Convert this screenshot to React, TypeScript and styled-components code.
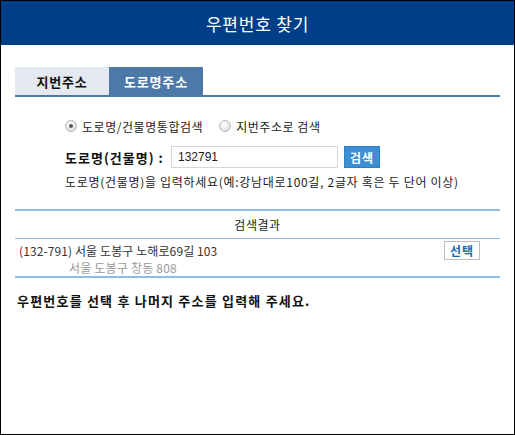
import styled, { createGlobalStyle } from "styled-components"

const GlobalStyle = createGlobalStyle`
  html, body {
    margin: 0;
    padding: 0;
    background: #fff;
  }
  * {
    box-sizing: border-box;
  }
  body {
    font-family: "Noto Sans CJK KR", "Noto Sans", sans-serif;
    font-size: 12px;
    letter-spacing: 0.55px;
    color: #222;
  }
`

const Frame = styled.div`
  width: 515px;
  height: 435px;
  border: 1px solid #000;
  display: flex;
  flex-direction: column;
`

const Header = styled.header`
  height: 44px;
  background: #003f87;
  color: #fff;
  display: flex;
  align-items: center;
  justify-content: center;
  font-size: 17px;
  letter-spacing: 0.8px;
`

const Body = styled.div`
  padding: 22px 14px 0 14px;
  display: flex;
  flex-direction: column;
`

const Tabs = styled.div`
  display: flex;
  border-bottom: 2px solid #4d79a8;
`

const Tab = styled.div<{ $active?: boolean }>`
  width: 94px;
  height: 28px;
  display: flex;
  align-items: center;
  justify-content: center;
  font-size: 13px;
  font-weight: 700;
  letter-spacing: 0.8px;
  background: ${(p) => (p.$active ? "#4d79a8" : "#e4e9f1")};
  color: ${(p) => (p.$active ? "#fff" : "#111")};
`

const SearchBox = styled.div`
  padding: 20px 0 0 50px;
  display: flex;
  flex-direction: column;
`

const RadioRow = styled.div`
  display: flex;
  align-items: center;
  height: 18px;
  gap: 16px;
`

const RadioLabel = styled.label`
  display: flex;
  align-items: center;
  gap: 5px;
  color: #222;
`

const RadioDot = styled.span<{ $checked?: boolean }>`
  width: 12px;
  height: 12px;
  border-radius: 50%;
  border: 1px solid #b9b9b9;
  background: radial-gradient(circle at 40% 35%, #ffffff 0%, #e6e6e6 60%, #cfcfcf 100%);
  display: flex;
  align-items: center;
  justify-content: center;

  &::after {
    content: "";
    width: 4px;
    height: 4px;
    border-radius: 50%;
    background: ${(p) => (p.$checked ? "#555" : "transparent")};
  }
`

const InputRow = styled.div`
  display: flex;
  align-items: center;
  margin-top: 11px;
  height: 22px;
`

const FieldLabel = styled.span`
  font-weight: 700;
  font-size: 13px;
  letter-spacing: 1px;
  color: #111;
  width: 106px;
`

const TextInput = styled.input`
  width: 167px;
  height: 22px;
  border: 1px solid #d6d6d6;
  padding: 0 6px;
  font-family: "Liberation Sans", sans-serif;
  font-size: 12px;
  color: #222;
  outline: none;
`

const SearchButton = styled.button`
  margin-left: 6px;
  width: 36px;
  height: 22px;
  border: 1px solid #2f7fc3;
  background: #3d8fd3;
  color: #fff;
  font-family: inherit;
  font-weight: 700;
  font-size: 12px;
  letter-spacing: 1px;
  padding: 0;
`

const Hint = styled.p`
  margin: 5px 0 0 0;
  height: 17px;
  line-height: 17px;
  letter-spacing: 0.7px;
  white-space: nowrap;
  color: #222;
`

const Results = styled.div`
  margin-top: 19px;
  border-top: 2px solid #8cbde6;
  border-bottom: 2px solid #8cbde6;
`

const ResultsTitle = styled.div`
  height: 28px;
  display: flex;
  align-items: center;
  justify-content: center;
  border-bottom: 1px solid #8cbde6;
  color: #222;
`

const ResultRow = styled.div`
  display: flex;
  justify-content: space-between;
  padding: 3px 20px 0 4px;
`

const AddressBlock = styled.div`
  display: flex;
  flex-direction: column;
`

const RoadAddress = styled.span`
  line-height: 17px;
  letter-spacing: 0.1px;
  color: #333;
`

const LotAddress = styled.span`
  line-height: 17px;
  padding-left: 50px;
  letter-spacing: 0.2px;
  color: #9a9a9a;
`

const SelectButton = styled.button`
  width: 36px;
  height: 19px;
  margin-top: -1px;
  border: 1px solid #bdbdbd;
  background: #fff;
  color: #1e66b5;
  font-family: inherit;
  font-weight: 700;
  font-size: 12px;
  letter-spacing: 1px;
  padding: 0;
`

const Notice = styled.p`
  margin: 13px 0 0 2px;
  font-size: 13px;
  font-weight: 700;
  letter-spacing: 1.2px;
  color: #111;
`

export default function App() {
  return (
    <>
      <GlobalStyle />
      <Frame>
        <Header>우편번호 찾기</Header>
        <Body>
          <Tabs>
            <Tab>지번주소</Tab>
            <Tab $active>도로명주소</Tab>
          </Tabs>
          <SearchBox>
            <RadioRow>
              <RadioLabel>
                <RadioDot $checked />
                도로명/건물명통합검색
              </RadioLabel>
              <RadioLabel>
                <RadioDot />
                지번주소로 검색
              </RadioLabel>
            </RadioRow>
            <InputRow>
              <FieldLabel>도로명(건물명) :</FieldLabel>
              <TextInput defaultValue="132791" />
              <SearchButton>검색</SearchButton>
            </InputRow>
            <Hint>도로명(건물명)을 입력하세요(예:강남대로100길, 2글자 혹은 두 단어 이상)</Hint>
          </SearchBox>
          <Results>
            <ResultsTitle>검색결과</ResultsTitle>
            <ResultRow>
              <AddressBlock>
                <RoadAddress>(132-791) 서울 도봉구 노해로69길 103</RoadAddress>
                <LotAddress>서울 도봉구 창동 808</LotAddress>
              </AddressBlock>
              <SelectButton>선택</SelectButton>
            </ResultRow>
          </Results>
          <Notice>우편번호를 선택 후 나머지 주소를 입력해 주세요.</Notice>
        </Body>
      </Frame>
    </>
  )
}
